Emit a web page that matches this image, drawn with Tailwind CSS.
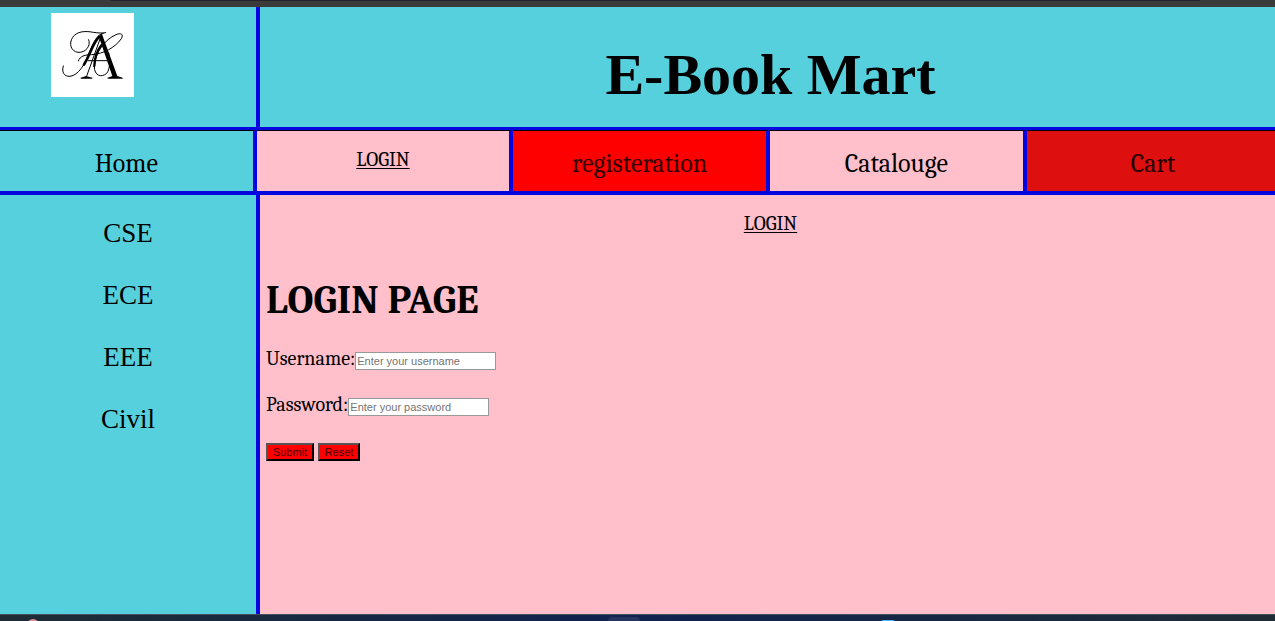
<!DOCTYPE html>
<html lang="en">
<head>
<meta charset="utf-8">
<title>E-Book Mart</title>
<script src="https://cdn.jsdelivr.net/npm/@tailwindcss/browser@4"></script>
</head>
<body class="flex h-screen flex-col overflow-hidden bg-[#ffc0cb] font-['Liberation_Serif',serif] text-black">
  <div class="h-[7px] shrink-0 bg-[#3b3b3b]"><div class="mr-[75px] ml-[110px] h-px bg-[#25252d]"></div></div>
  <header class="flex h-[120px] shrink-0 bg-[#57d0dd]">
    <div class="w-[20.08%] shrink-0 pt-[6px] pl-[51px]">
      <svg class="h-[84px] w-[83px] bg-white" viewBox="0 0 83 84" fill="none" stroke="#000" stroke-linecap="round" role="img" aria-label="AK monogram">
        <g transform="translate(9 13) scale(.3333)">
          <path stroke-width="3" d="M86 41C94 60 76 81 54 79C32 76 26 52 38 34C50 16 75 14 100 19C115 21 125 22 137 20"/>
          <path stroke-width="3" d="M130 22C110 25 100 50 88 80C75 115 55 148 30 151C12 152 4 138 10 120"/>
          <path stroke-width="8" d="M118 32C104 46 97 65 88 84C83 96 78 106 72 116"/>
          <path stroke-width="3" d="M55 105C60 90 75 86 95 86C130 84 165 65 184 38C192 24 182 20 168 26C135 40 105 80 103 120C102 150 125 156 140 142C152 128 150 95 146 80"/>
          <path stroke-width="7" d="M124 58C110 76 104 96 103 120"/>
          <path stroke-width="3" d="M124 28L78 156M85 104H147"/>
          <path fill="#000" stroke="none" d="M117 34L125 22L172 150L188 155V158H143V155L157 150ZM62 158V155L78 150L97 155V158Z"/>
        </g>
      </svg>
    </div>
    <div class="flex flex-1 items-center justify-center border-l-4 border-[#0505df] pt-4 pl-[6px]">
      <h1 class="text-[58px] leading-none font-bold">E-Book Mart</h1>
    </div>
  </header>
  <nav class="flex h-[68px] shrink-0 border-t-3 border-b-4 border-[#0505df] font-['Cambria','Liberation_Serif',serif] text-[26px] leading-[66px]">
    <a href="#home" class="w-[20.13%] shrink-0 border-t border-r-4 border-t-black border-r-[#0505df] bg-[#57d0dd] text-center">Home</a>
    <a href="#login" class="w-[20.13%] shrink-0 border-t border-r-4 border-t-black border-r-[#0505df] bg-[#ffc0cb] text-center text-[20px] leading-[58px] underline decoration-1 underline-offset-2">LOGIN</a>
    <a href="#registeration" class="w-[20.13%] shrink-0 border-t border-r-4 border-t-black border-r-[#0505df] bg-[#ff0000] text-center text-[#300]">registeration</a>
    <a href="#catalouge" class="w-[20.13%] shrink-0 border-t border-r-4 border-t-black border-r-[#0505df] bg-[#ffc0cb] text-center">Catalouge</a>
    <a href="#cart" class="w-[20.13%] shrink-0 border-t border-r-4 border-t-black border-r-[#0505df] bg-[#dd0f0f] text-center text-[#200]">Cart</a>
  </nav>
  <div class="flex min-h-0 flex-1">
    <aside class="flex w-[20.08%] shrink-0 flex-col gap-8 bg-[#57d0dd] pt-[23px] text-center text-[27px] leading-[30px]">
      <a href="#cse">CSE</a>
      <a href="#ece">ECE</a>
      <a href="#eee">EEE</a>
      <a href="#civil">Civil</a>
    </aside>
    <main class="flex-1 border-l-4 border-[#0505df] bg-[#ffc0cb] pt-4 pl-[6px] font-['Cambria','Liberation_Serif',serif]">
      <div class="text-center text-[20px] leading-[26px]"><a href="#login" class="underline decoration-1 underline-offset-2">LOGIN</a></div>
      <h2 class="mt-[38px] text-[40px] leading-[50px] font-bold">LOGIN PAGE</h2>
      <form class="mt-[21px]">
        <div class="flex h-[46px] items-start text-[20px] leading-[26px]">
          <label for="user">Username:</label>
          <input id="user" type="text" placeholder="Enter your username" class="mt-[6px] h-[18px] w-[141px] border border-[#999] bg-white px-px font-['Liberation_Sans',sans-serif] text-[11px] placeholder:text-[#757575]">
        </div>
        <div class="flex h-[46px] items-start text-[20px] leading-[26px]">
          <label for="pass">Password:</label>
          <input id="pass" type="password" placeholder="Enter your password" class="mt-[6px] h-[18px] w-[141px] border border-[#999] bg-white px-px font-['Liberation_Sans',sans-serif] text-[11px] placeholder:text-[#757575]">
        </div>
        <div class="flex gap-1 pt-[5px] font-['Liberation_Sans',sans-serif] text-[11px] leading-[14px] text-[#400]">
          <button type="submit" class="h-[18px] w-12 border-2 border-t-[#555] border-r-black border-b-black border-l-[#555] bg-[#ff0000]">Submit</button>
          <button type="reset" class="h-[18px] w-[42px] border-2 border-t-[#555] border-r-black border-b-black border-l-[#555] bg-[#ff0000]">Reset</button>
        </div>
      </form>
    </main>
  </div>
  <div class="relative h-[7px] shrink-0 overflow-hidden border-t border-[#45505c] bg-linear-to-r from-[#1f2c35] via-[#10224f] to-[#1f2c35]">
    <span class="absolute top-[4px] left-[27px] size-3 rounded-full bg-[#e88a92]"></span>
    <span class="absolute top-[2px] left-[608px] h-3 w-8 rounded bg-[#26355f]"></span>
    <span class="absolute top-[5px] left-[880px] h-3 w-4 rounded bg-[#4db5f5]"></span>
  </div>
</body>
</html>
